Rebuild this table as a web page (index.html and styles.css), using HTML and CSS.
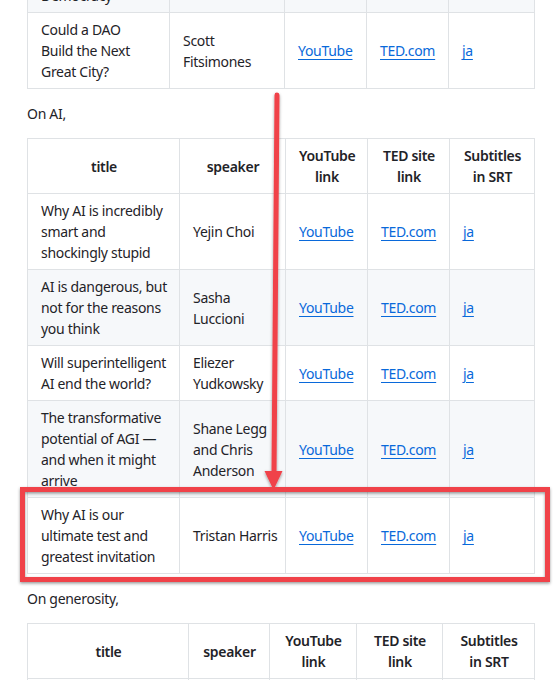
FILE: index.html
```html
<!DOCTYPE html>
<html lang="en">
<head>
<meta charset="utf-8">
<title>TED talks</title>
<link rel="stylesheet" href="styles.css">
</head>
<body>
<div class="page">
  <article class="markdown">
    <table class="talks t-dao">
      <colgroup><col class="c1"><col class="c2"><col class="c3"><col class="c4"><col class="c5"></colgroup>
      <tbody>
        <tr class="alt"><td>Democracy</td><td></td><td></td><td></td><td></td></tr>
        <tr><td>Could a DAO Build the Next Great City?</td><td>Scott Fitsimones</td><td><a href="#">YouTube</a></td><td><a href="#">TED.com</a></td><td><a href="#">ja</a></td></tr>
      </tbody>
    </table>

    <p>On AI,</p>

    <table class="talks t-ai">
      <colgroup><col class="c1"><col class="c2"><col class="c3"><col class="c4"><col class="c5"></colgroup>
      <thead>
        <tr><th>title</th><th>speaker</th><th>YouTube link</th><th>TED site link</th><th>Subtitles in SRT</th></tr>
      </thead>
      <tbody>
        <tr><td>Why AI is incredibly smart and shockingly stupid</td><td>Yejin Choi</td><td><a href="#">YouTube</a></td><td><a href="#">TED.com</a></td><td><a href="#">ja</a></td></tr>
        <tr class="alt"><td>AI is dangerous, but not for the reasons you think</td><td>Sasha Luccioni</td><td><a href="#">YouTube</a></td><td><a href="#">TED.com</a></td><td><a href="#">ja</a></td></tr>
        <tr><td>Will superintelligent AI end the world?</td><td>Eliezer Yudkowsky</td><td><a href="#">YouTube</a></td><td><a href="#">TED.com</a></td><td><a href="#">ja</a></td></tr>
        <tr class="alt"><td>The transformative potential of AGI — and when it might arrive</td><td>Shane Legg and Chris Anderson</td><td><a href="#">YouTube</a></td><td><a href="#">TED.com</a></td><td><a href="#">ja</a></td></tr>
        <tr><td>Why AI is our ultimate test and greatest invitation</td><td class="nowrap">Tristan Harris</td><td><a href="#">YouTube</a></td><td><a href="#">TED.com</a></td><td><a href="#">ja</a></td></tr>
      </tbody>
    </table>

    <p>On generosity,</p>

    <table class="talks t-gen">
      <colgroup><col class="c1"><col class="c2"><col class="c3"><col class="c4"><col class="c5"></colgroup>
      <thead>
        <tr><th>title</th><th>speaker</th><th>YouTube link</th><th>TED site link</th><th>Subtitles in SRT</th></tr>
      </thead>
      <tbody>
        <tr><td>&nbsp;</td><td></td><td></td><td></td><td></td></tr>
      </tbody>
    </table>
  </article>

  <svg class="annotation" width="554" height="680" viewBox="0 0 554 680" aria-hidden="true">
    <defs>
      <filter id="shadow" x="-5%" y="-20%" width="110%" height="140%">
        <feDropShadow dx="0" dy="1.5" stdDeviation="1.5" flood-color="#000" flood-opacity="0.4"/>
      </filter>
    </defs>
    <g filter="url(#shadow)">
      <line x1="277" y1="95" x2="274" y2="474" stroke="#f0424a" stroke-width="5" stroke-linecap="round"/>
      <polygon points="264.5,471 282.5,471 273.5,490" fill="#f0424a"/>
      <rect x="22.5" y="489.5" width="525" height="90" fill="none" stroke="#f0424a" stroke-width="5"/>
    </g>
  </svg>
</div>
</body>
</html>
```

FILE: styles.css
```css
html, body {
  margin: 0;
  padding: 0;
  background: #ffffff;
}

.page {
  position: relative;
  width: 554px;
  height: 680px;
  overflow: hidden;
}

.markdown {
  padding-left: 27px;
  font-family: "Noto Sans", "Open Sans", sans-serif;
  font-size: 14px;
  line-height: 21px;
  letter-spacing: -0.3px;
  color: #1f2328;
}

.markdown p {
  margin: 14px 0;
}

.talks {
  border-collapse: collapse;
  border-spacing: 0;
  table-layout: fixed;
  width: 507px;
  margin: 14px 0;
}

.t-dao {
  margin-top: -22px;
}

.talks th,
.talks td {
  border: 1px solid #dfe2e5;
  padding: 6px 12px 6px 13px;
  vertical-align: middle;
}

.t-dao td {
  padding-right: 15px;
}

.talks th {
  font-weight: 600;
  text-align: center;
}

.talks td {
  text-align: left;
}

.talks tr {
  background: #ffffff;
}

.talks tr.alt {
  background: #f6f8fa;
}

.talks a {
  color: #0969da;
  text-decoration: underline;
  text-underline-offset: 3px;
  text-decoration-thickness: 1px;
}

.nowrap {
  white-space: nowrap;
}

.t-dao .c1 { width: 142px; }
.t-dao .c2 { width: 115px; }
.t-dao .c3 { width: 82px; }
.t-dao .c4 { width: 82px; }
.t-dao .c5 { width: 86px; }

.t-ai .c1 { width: 152px; }
.t-ai .c2 { width: 106px; }
.t-ai .c3 { width: 82px; }
.t-ai .c4 { width: 82px; }
.t-ai .c5 { width: 85px; }

.t-gen .c1 { width: 161px; }
.t-gen .c2 { width: 81px; }
.t-gen .c3 { width: 87px; }
.t-gen .c4 { width: 86px; }
.t-gen .c5 { width: 92px; }

.annotation {
  position: absolute;
  top: 0;
  left: 0;
  pointer-events: none;
}
```
